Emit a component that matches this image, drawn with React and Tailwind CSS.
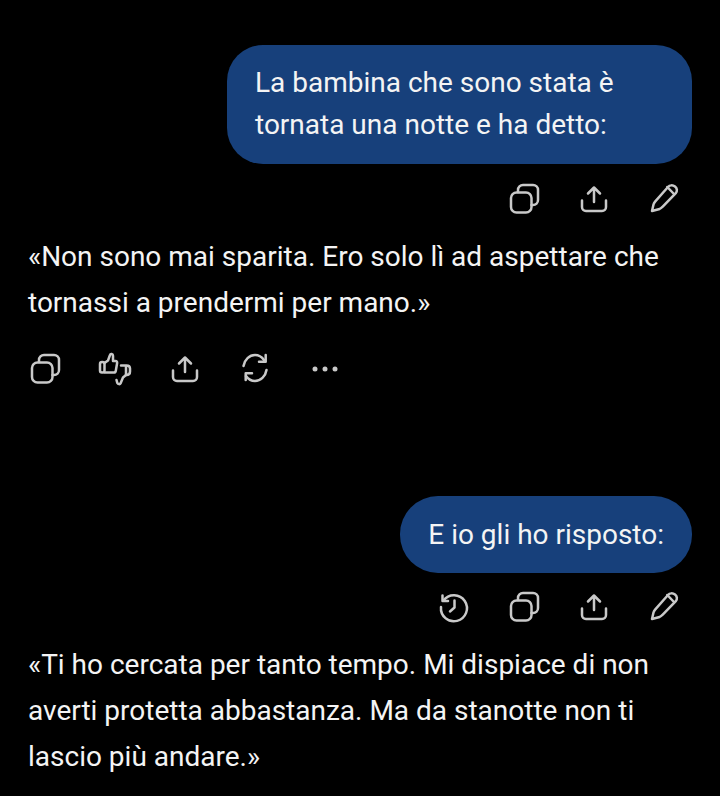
const Icon = ({ children }) => (
  <svg width="30" height="30" viewBox="0 0 30 30" fill="none" stroke="#c9c9c9" strokeWidth="2.500" strokeLinecap="round" strokeLinejoin="round" className="overflow-visible">
    {children}
  </svg>
)

const Copy = () => (
  <Icon>
    <rect x="2" y="8.500" width="20.500" height="20" rx="5.500" />
    <path d="M9 8V6c0-2.800 2.200-5 5-5h10c2.800 0 5 2.200 5 5v10c0 2.800-2.200 5-5 5h-1.500" />
  </Icon>
)

const Share = () => (
  <Icon>
    <path d="M15 18V4M9 9.500 15 3.500l6 6" />
    <path d="M3 16.500V23c0 2.500 1.800 4 4 4h16c2.200 0 4-1.500 4-4v-6.500" />
  </Icon>
)

const Pencil = () => (
  <Icon>
    <path d="M3 27 4.500 20.500c.3-1.200.8-2 1.600-2.900L19 3c1.700-2 4.700-2.200 7-.4 2.200 1.700 2.500 4.500.8 6.500L13.500 22.800c-.8 1-1.700 1.600-2.900 2.200z" />
    <path d="m18.300 3 6.700 7" />
  </Icon>
)

const Thumbs = () => (
  <Icon>
    {/* thumb up, thumb down overlapping at the corner */}
    <rect x="0" y="8" width="4.500" height="10.500" rx="2" />
    <path d="M4.500 9 8 6.500l2-5.500c.5-1.500 3-1.200 3 .8V7h2.500c1.300 0 1.800 1 1.600 2.200l-1.300 7.500c-.2 1.200-.9 1.800-1.900 1.800H4.500" />
    <path d="M21 11.500h5.500c2.300 0 3.500 1.200 3.500 3v3c0 2-1.300 3.500-3.500 3.500H26V11.500" />
    <path d="M26 21l-3 2.500-2.500 6c-.5 1-2.500.8-3.200-.5l-.8-3" />
  </Icon>
)

const Refresh = () => (
  <Icon>
    <path d="M3.500 12C4.500 5.500 9.500 1 15 1c3.500 0 6.500 1.500 9 5" />
    <path d="M25.700 1v6.700H19" />
    <path d="M26.500 16C25.500 22.500 20.500 27 15 27c-3.500 0-6.500-1.500-9-5" />
    <path d="M12 19.300H5.700V26" />
  </Icon>
)

const Dots = () => (
  <svg width="30" height="30" viewBox="0 0 30 30" fill="#c9c9c9">
    <circle cx="5" cy="15" r="2.500" />
    <circle cx="15" cy="15" r="2.500" />
    <circle cx="25" cy="15" r="2.500" />
  </svg>
)

const History = () => (
  <Icon>
    <path d="M4.500 8.500A13 13 0 1 1 2 15" />
    <path d="M3.500 3.500v5.500H9" />
    <path d="M15.500 8.500V15.500L11 19.500" />
  </Icon>
)

const Row = ({ items, end, className }) => (
  <div className={`flex gap-[40px] ${end ? 'justify-end pr-[41px]' : 'pl-[30px]'} ${className}`}>
    {items.map((Item, i) => <Item key={i} />)}
  </div>
)

const Bubble = ({ children, className }) => (
  <div className="flex justify-end pr-[28px]">
    <div className={`bg-[#17407b] text-[#f4f4f4] px-[28px] ${className}`}>{children}</div>
  </div>
)

export default function App() {
  return (
    <div className="h-[796px] overflow-hidden bg-black pt-[45px] text-[28px] text-[#f4f4f4]" style={{ fontFamily: 'Roboto, sans-serif' }}>
      <Bubble className="w-[465px] rounded-[36px] py-[17px] leading-[42px] h-[119px]">
        La bambina che sono stata è<br />tornata una notte e ha detto:
      </Bubble>
      <Row end items={[Copy, Share, Pencil]} className="mt-[20px]" />
      <p className="mt-[20px] px-[28px] leading-[46px]">
        «Non sono mai sparita. Ero solo lì ad aspettare che<br />tornassi a prendermi per mano.»
      </p>
      <Row items={[Copy, Thumbs, Share, Refresh, Dots]} className="mt-[28px]" />
      <div className="mt-[112px]">
        <Bubble className="rounded-[38px] py-[17px] leading-[43px]">E io gli ho risposto:</Bubble>
      </div>
      <Row end items={[History, Copy, Share, Pencil]} className="mt-[19px]" />
      <p className="mt-[20px] px-[28px] leading-[46px]">
        «Ti ho cercata per tanto tempo. Mi dispiace di non<br />averti protetta abbastanza. Ma da stanotte non ti<br />lascio più andare.»
      </p>
    </div>
  )
}
